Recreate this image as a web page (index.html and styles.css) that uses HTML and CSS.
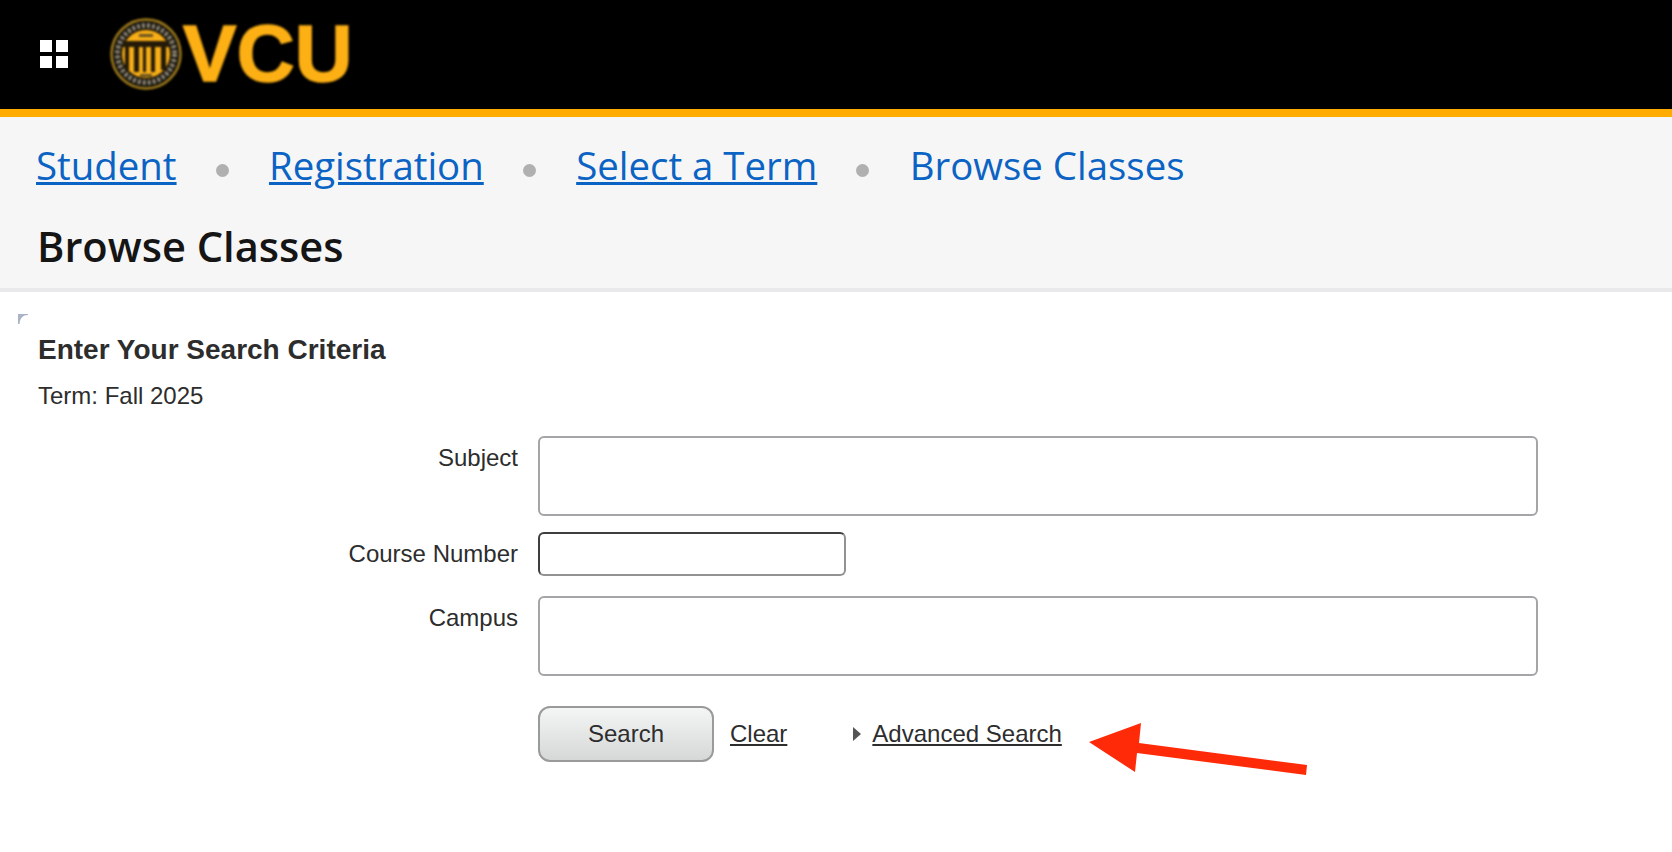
FILE: index.html
```html
<!DOCTYPE html>
<html lang="en">
<head>
<meta charset="utf-8">
<title>Browse Classes</title>
<link rel="stylesheet" href="styles.css">
</head>
<body>
<header class="top">
  <svg class="grid-icon" width="28" height="28" viewBox="0 0 28 28"><path fill="#fff" d="M0 0h12v12H0zM16 0h12v12H16zM0 16h12v12H0zM16 16h12v12H16z"/></svg>
  <div class="logo">
    <svg class="seal" width="72" height="72" viewBox="0 0 72 72">
      <circle cx="36" cy="36" r="34.5" fill="#15120b" stroke="#a57f1c" stroke-width="2.4"/>
      <circle cx="36" cy="36" r="28.5" fill="none" stroke="#8d8676" stroke-width="5" stroke-dasharray="3 2"/>
      <circle cx="36" cy="36" r="24.5" fill="#f8ae17" stroke="#1d1808" stroke-width="1.2"/>
      <path fill="#241a08" d="M13 23h46v6H13zM15 29h4v23h-4zM24 29h5v25h-5zM33 29h3v25h-3zM41 29h4v25h-4zM51 29h5v23h-5z"/>
      <path fill="#6a5320" d="M29 16h14v3H29zM30 56h12v3H30z"/>
    </svg>
    <span class="wordmark">VCU</span>
  </div>
</header>
<section class="title-bar">
  <nav class="crumbs">
    <a class="crumb" href="#">Student</a><span class="dot"></span>
    <a class="crumb" href="#">Registration</a><span class="dot"></span>
    <a class="crumb" href="#">Select a Term</a><span class="dot"></span>
    <span class="crumb current">Browse Classes</span>
  </nav>
  <h1 class="page-title">Browse Classes</h1>
</section>
<main class="content">
  <svg class="corner" width="10" height="10" viewBox="0 0 10 10"><path fill="#a9b4c6" d="M0 0H10V1C5 1 2 4 1.5 10H0Z"/></svg>
  <h2 class="criteria">Enter Your Search Criteria</h2>
  <p class="term">Term: Fall 2025</p>
  <form class="form">
    <label class="label">Subject</label>
    <div class="field tall"></div>
    <label class="label">Course Number</label>
    <div class="field short"></div>
    <label class="label">Campus</label>
    <div class="field tall"></div>
    <div class="actions">
      <button class="search" type="button">Search</button>
      <a class="link clear" href="#">Clear</a>
      <span class="caret"></span>
      <a class="link" href="#">Advanced Search</a>
    </div>
  </form>
  <svg class="arrow" width="220" height="52" viewBox="0 0 220 52"><path fill="#ff2a08" d="M0 19 52 0 50 20 218 42 217 52 48 30 46 49Z"/></svg>
</main>
</body>
</html>
```
FILE: styles.css
```css
* { box-sizing: border-box; }
html, body { margin: 0; padding: 0; background: #fff; }
body { width: 1672px; height: 852px; overflow: hidden; font-family: "Liberation Sans", Arial, sans-serif; color: #2d2d2d; }

.top { height: 117px; background: #000; border-bottom: 8px solid #ffab00; display: flex; align-items: center; padding-left: 40px; }
.grid-icon { display: block; margin-right: 42px; margin-top: -1px; }
.logo { display: flex; align-items: center; height: 72px; margin-top: -1px; }
.seal { display: block; filter: blur(1px); }
.wordmark { font: bold 80px/72px "Liberation Sans", Arial, sans-serif; color: #fdb014; letter-spacing: 0.3px; -webkit-text-stroke: 1.6px #fdb014; filter: blur(0.8px); margin-left: 1px; }

.title-bar { height: 175px; background: #f6f6f6; border-bottom: 4px solid #e9e9eb; padding: 23px 0 0 36px; font-family: "Open Sans", sans-serif; }
.crumbs { display: flex; align-items: center; height: 50px; }
.crumb { font-size: 38.4px; line-height: 50px; color: #0b63c4; }
.dot { width: 13px; height: 13px; border-radius: 50%; background: #b0b0b0; margin: 10px 40.4px 0 39px; }
.page-title { margin: 29px 0 0 1px; font-size: 41.6px; line-height: 54px; font-weight: 600; color: #151515; }

.content { position: relative; padding: 0 0 0 38px; }
.corner { position: absolute; left: 18px; top: 22px; display: block; }
.criteria { margin: 0; padding-top: 42px; font-size: 28px; line-height: 32px; font-weight: bold; }
.term { margin: 15px 0 0; font-size: 24px; line-height: 30px; }

.form { display: grid; grid-template-columns: 480px 1000px; column-gap: 20px; row-gap: 16px; margin-top: 25px; }
.label { text-align: right; font-size: 24px; line-height: 28px; padding-top: 8px; }
.field { background: #fff; border: 2px solid #a5a5a8; border-radius: 6px; }
.tall { height: 80px; }
.short { width: 308px; height: 44px; margin-bottom: 4px; border-color: #3e3e3e #929292 #929292 #3e3e3e; }
.actions { grid-column: 2; display: flex; align-items: center; margin-top: 14px; height: 56px; }
.search { width: 176px; height: 56px; border: 2px solid #9a9a9a; border-radius: 12px; background: linear-gradient(#f4f5f5, #d6d8d8); font: 24px "Liberation Sans", Arial, sans-serif; color: #2d2d2d; padding: 0; }
.link { font-size: 24px; line-height: 28px; color: #2d2d2d; }
.clear { margin-left: 16px; }
.caret { width: 0; height: 0; margin: 0 11px 0 66px; border-left: 8px solid #555; border-top: 7px solid transparent; border-bottom: 7px solid transparent; }
.arrow { position: absolute; left: 1089px; top: 431px; }
```
